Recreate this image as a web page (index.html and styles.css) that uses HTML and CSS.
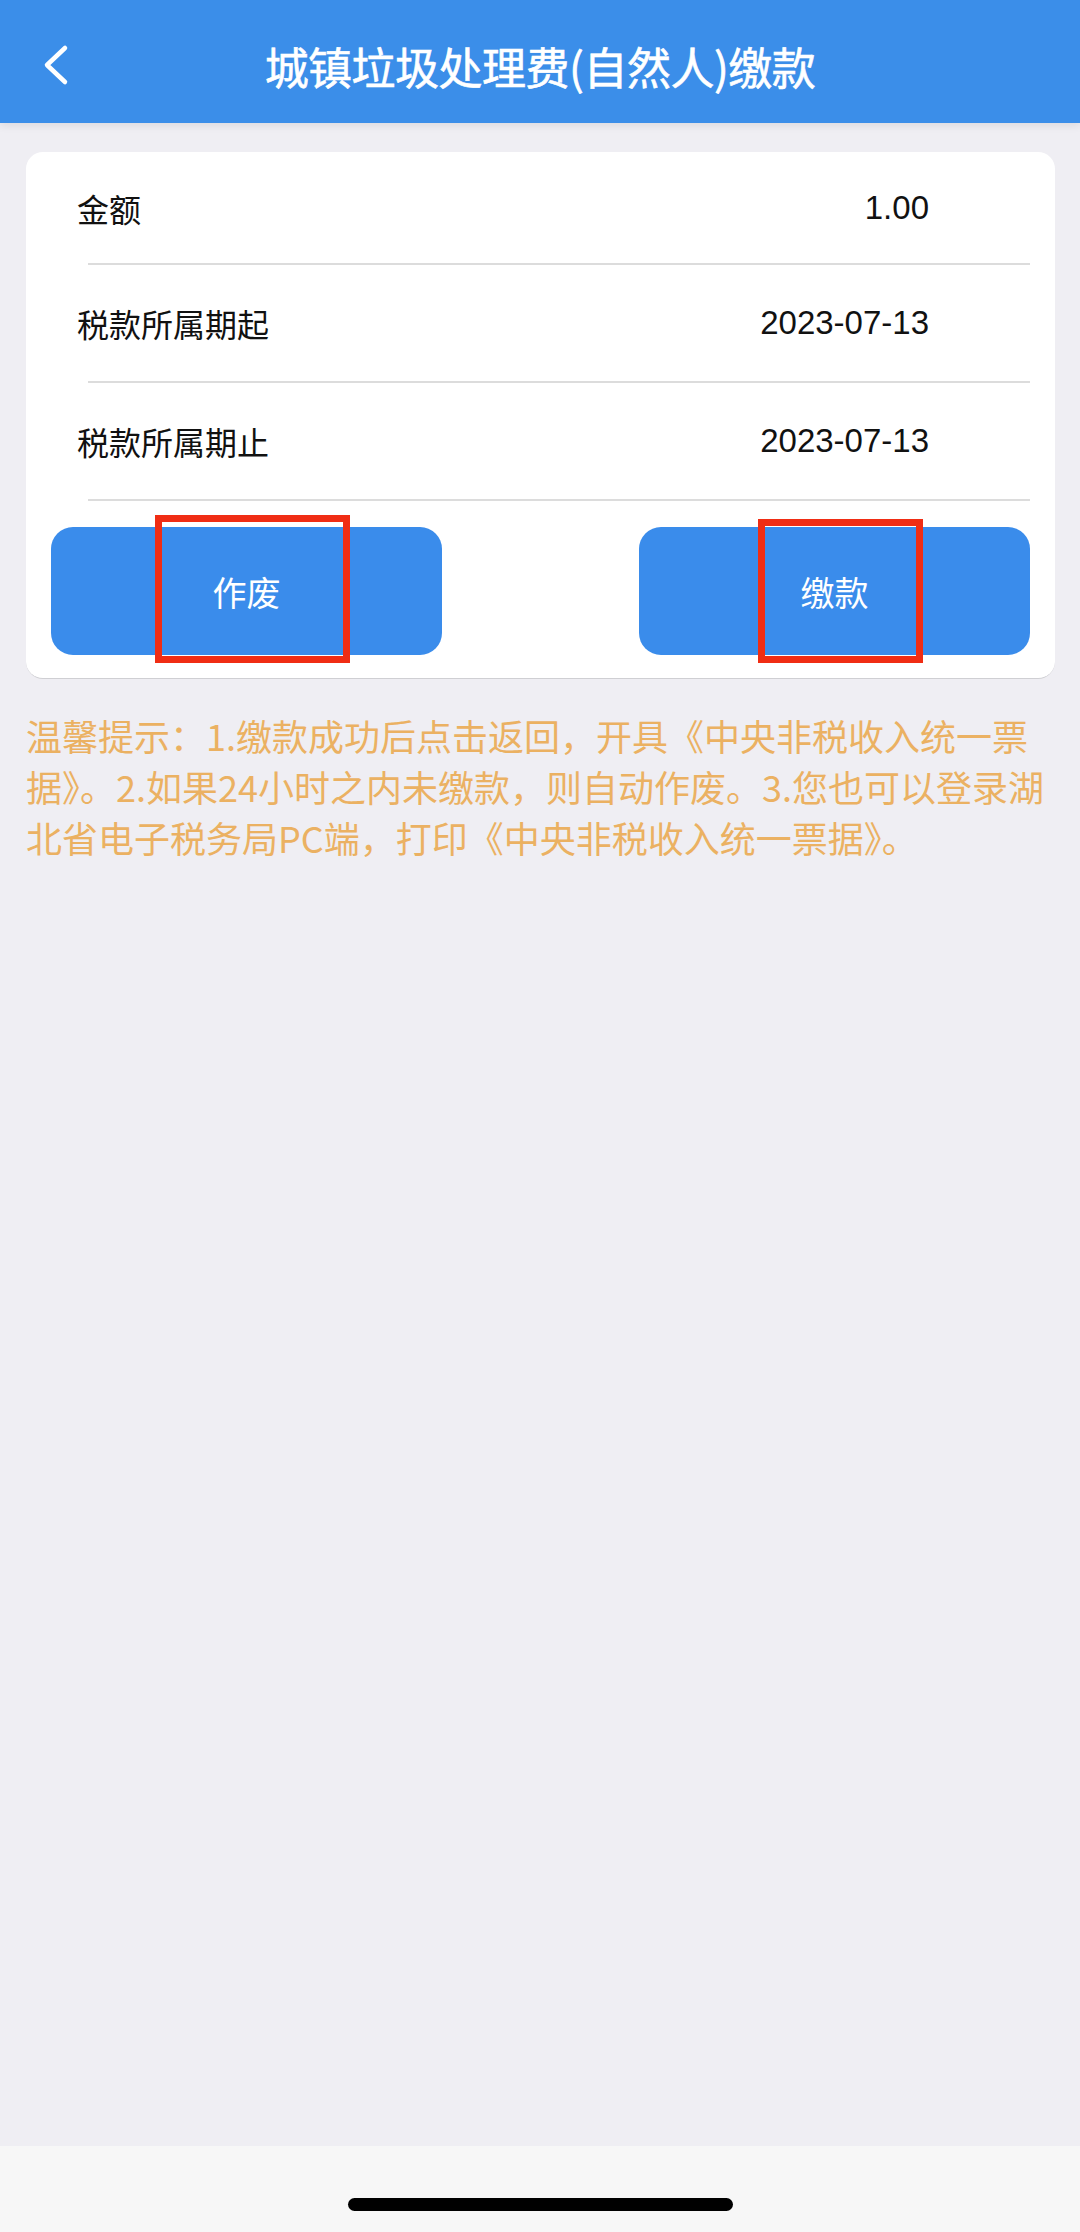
FILE: index.html
```html
<!DOCTYPE html>
<html lang="zh-CN">
<head>
<meta charset="utf-8">
<title>城镇垃圾处理费(自然人)缴款</title>
<link rel="stylesheet" href="styles.css">
</head>
<body>
<div class="page">
  <header class="header">
    <div class="back">
      <svg width="30" height="44" viewBox="0 0 30 44"><path d="M25 4 L7 21 L25 38" fill="none" stroke="#fff" stroke-width="4.5" stroke-linecap="round" stroke-linejoin="round"/></svg>
    </div>
    <h1 class="title">城镇垃圾处理费(自然人)缴款</h1>
    <div class="spacer"></div>
  </header>
  <main class="main">
    <section class="card">
      <div class="row"><span class="label">金额</span><span class="value">1.00</span></div>
      <div class="row"><span class="label">税款所属期起</span><span class="value">2023-07-13</span></div>
      <div class="row"><span class="label">税款所属期止</span><span class="value">2023-07-13</span></div>
      <div class="actions">
        <button class="btn">作废<span class="mark mark-left"></span></button>
        <button class="btn">缴款<span class="mark mark-right"></span></button>
      </div>
    </section>
    <p class="notice">温馨提示：1.缴款成功后点击返回，开具《中央非税收入统一票据》。2.如果24小时之内未缴款，则自动作废。3.您也可以登录湖北省电子税务局PC端，打印《中央非税收入统一票据》。</p>
  </main>
  <footer class="home">
    <div class="indicator"></div>
  </footer>
</div>
</body>
</html>
```

FILE: styles.css
```css
html, body {
  margin: 0;
  padding: 0;
}
body {
  font-family: "Noto Sans CJK SC", "Liberation Sans", sans-serif;
  background: #efeef3;
}
.page {
  width: 1080px;
  height: 2232px;
  display: flex;
  flex-direction: column;
}
.header {
  height: 123px;
  box-sizing: border-box;
  padding: 8px 0 0 0;
  background: #3b8ee9;
  display: grid;
  grid-template-columns: 1fr auto 1fr;
  align-items: center;
  box-shadow: 0 3px 8px rgba(0, 0, 0, 0.08);
  position: relative;
  z-index: 1;
}
.back {
  padding-left: 40px;
  display: flex;
  align-items: center;
}
.title {
  margin: 0;
  color: #fff;
  font-size: 44px;
  font-weight: 400;
  letter-spacing: -0.5px;
  -webkit-text-stroke: 0.6px #fff;
}
.main {
  flex: 1;
  padding: 29px 25px 0 26px;
}
.card {
  background: #fff;
  border-radius: 17px;
  border-bottom: 1px solid #cfcfd3;
}
.row {
  margin: 0 25px 0 62px;
  border-bottom: 2px solid #dcdcdc;
  display: flex;
  align-items: center;
  justify-content: space-between;
  padding-right: 101px;
  box-sizing: border-box;
  height: 118px;
}
.row:first-child {
  height: 113px;
}
.label {
  margin-left: -11px;
  font-size: 32px;
  color: #111;
}
.value {
  font-size: 33px;
  color: #111;
  font-family: "Liberation Sans", "Noto Sans CJK SC", sans-serif;
}
.actions {
  display: flex;
  justify-content: space-between;
  padding: 26px 25px 23px 25px;
}
.btn {
  position: relative;
  width: 391px;
  height: 128px;
  border: none;
  border-radius: 22px;
  background: #3a8ceb;
  color: #fff;
  font-family: "Noto Sans CJK SC", sans-serif;
  font-size: 34px;
  padding: 0;
}
.mark {
  position: absolute;
  border: 7px solid #f02d14;
  box-sizing: border-box;
}
.mark-left {
  left: 104px;
  top: -12px;
  width: 195px;
  height: 148px;
}
.mark-right {
  left: 119px;
  top: -8px;
  width: 165px;
  height: 144px;
}
.notice {
  margin: 31px 0 0 0;
  font-size: 36px;
  line-height: 51px;
  color: #ebb162;
}
.home {
  height: 86px;
  background: #f7f7f7;
  display: flex;
  justify-content: center;
  padding-top: 52px;
  box-sizing: border-box;
}
.indicator {
  width: 385px;
  height: 13px;
  border-radius: 7px;
  background: #000;
}
```
